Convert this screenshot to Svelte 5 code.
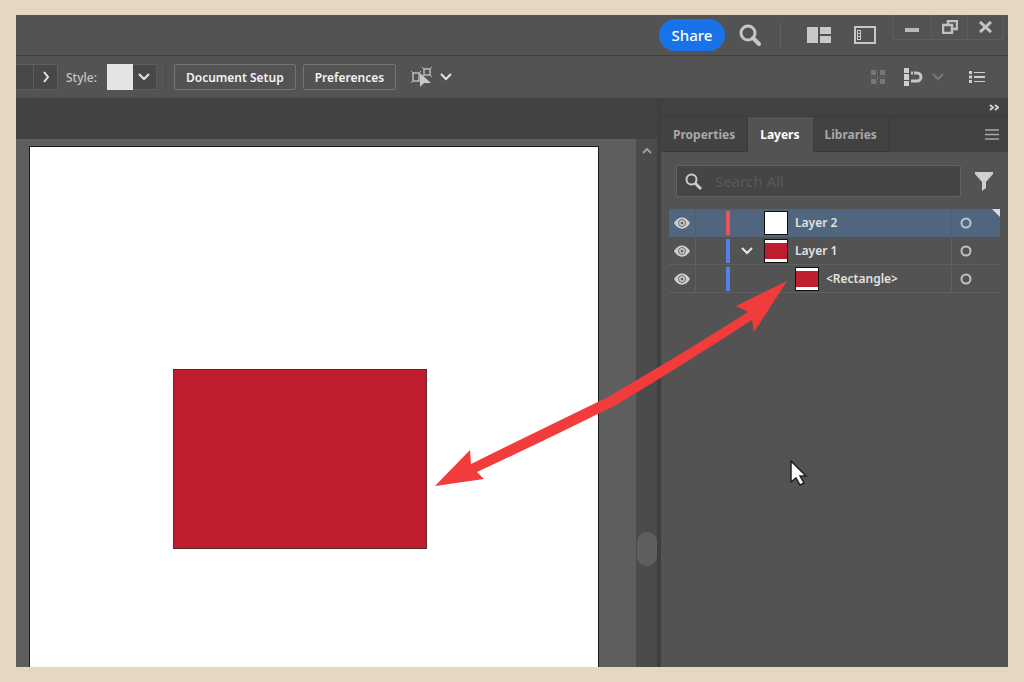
<script lang="ts">
  interface Layer {
    name: string;
    color: string;
    filled: boolean;
    expanded?: boolean;
    child?: boolean;
  }

  const layers: Layer[] = [
    { name: 'Layer 2', color: 'red', filled: false },
    { name: 'Layer 1', color: 'blue', filled: true, expanded: true },
    { name: '<Rectangle>', color: 'blue', filled: true, child: true },
  ];

  const tabs = ['Properties', 'Layers', 'Libraries'];

  let activeTab = $state('Layers');
  let selected = $state('Layer 2');
  let query = $state('');
</script>

<div class="page">
  <div class="window">
    <header class="title-bar">
      <button class="share">Share</button>
      <button class="icon search-btn" aria-label="Search">
        <svg width="24" height="24" viewBox="0 0 24 24" fill="none" stroke="#c6c6c6">
          <circle cx="10" cy="10" r="7" stroke-width="3" />
          <path d="M15 15l6 6" stroke-width="4" stroke-linecap="round" />
        </svg>
      </button>
      <span class="bar-divider"></span>
      <button class="icon arrange" aria-label="Arrange documents">
        <svg width="24" height="16" viewBox="0 0 24 16" fill="#c8c8c8">
          <path d="M0 0h11v16H0zM13 0h11v7H13zM13 9h11v7H13z" />
        </svg>
      </button>
      <button class="icon workspace-btn" aria-label="Switch workspace">
        <svg width="22" height="18" viewBox="0 0 22 18" fill="none" stroke="#c8c8c8">
          <rect x="1" y="1" width="20" height="16" stroke-width="2" />
          <rect x="3.5" y="4.500" width="3" height="9" />
          <path d="M3.500 7.500h3M3.500 10.500h3" />
        </svg>
      </button>
      <div class="window-controls">
        <button class="icon" aria-label="Minimize">
          <svg width="14" height="14" viewBox="0 0 14 14"><path d="M0 8h14v4H0z" fill="#b8b8b8" /></svg>
        </button>
        <button class="icon" aria-label="Restore">
          <svg width="16" height="14" viewBox="0 0 16 14" fill="none" stroke="#c0c0c0" stroke-width="2.500">
            <path d="M6 4V1h9v8h-4" />
            <path d="M1 5h9v8H1z" />
          </svg>
        </button>
        <button class="icon" aria-label="Close">
          <svg width="13" height="12" viewBox="0 0 13 12"><path d="M1 1l11 10M12 1L1 11" stroke="#c4c4c4" stroke-width="3" /></svg>
        </button>
      </div>
    </header>

    <div class="control-bar">
      <span class="stub"></span>
      <button class="icon drop" aria-label="More">
        <svg width="8" height="12" viewBox="0 0 8 12" fill="none"><path d="M2 1l4 5-4 5" stroke="#e4e4e4" stroke-width="2" /></svg>
      </button>
      <span class="label">Style:</span>
      <button class="swatch" aria-label="Graphic style"></button>
      <button class="icon drop" aria-label="Style options">
        <svg width="12" height="8" viewBox="0 0 12 8" fill="none"><path d="M1 1l5 5 5-5" stroke="#e4e4e4" stroke-width="2" /></svg>
      </button>
      <span class="bar-divider setup-divider"></span>
      <button class="outlined setup">Document Setup</button>
      <button class="outlined">Preferences</button>
      <button class="icon select-similar" aria-label="Select similar objects">
        <svg width="42" height="22" viewBox="0 0 42 22" fill="none" stroke="#b9b9b9">
          <path d="M3 7h6v8H3zM14 3h6v6h-6z" stroke-width="1.500" />
          <path d="M1 5l2 2M11 5L9 7M1 17l2-2M12 1l2 2M22 1l-2 2M22 11l-2-2M12 11l2-2" />
          <path d="M10 7v14l4-4 7 0z" fill="#c8c8c8" stroke="none" />
          <path d="M31 8l5 5 5-5" stroke="#e4e4e4" stroke-width="2" />
        </svg>
      </button>
      <span class="spacer"></span>
      <button class="icon grid-btn" aria-label="Snap to grid">
        <svg width="16" height="16" viewBox="0 0 16 16" fill="#777">
          <path d="M1 1h5v5H1zM10 1h5v5h-5zM1 10h5v5H1zM10 10h5v5h-5z" />
          <path d="M7.500 0v16M0 8h16" stroke="#6c6c6c" stroke-dasharray="2 1" />
        </svg>
      </button>
      <button class="icon snap-btn" aria-label="Snap to pixel">
        <svg width="20" height="20" viewBox="0 0 20 20" fill="#cfcfcf">
          <path d="M1 1h5v5H1zM1 7h5v6H1zM1 14h5v5H1z" />
          <path d="M8 6h6a4 4 0 0 1 0 8H8" fill="none" stroke="#c6c6c6" stroke-width="3" stroke-dasharray="2 1 30" />
        </svg>
      </button>
      <button class="icon snap-more" aria-label="Snap options">
        <svg width="12" height="8" viewBox="0 0 12 8" fill="none"><path d="M1 1l5 5 5-5" stroke="#777" stroke-width="2" /></svg>
      </button>
      <button class="icon bar-menu" aria-label="Control bar menu">
        <svg width="16" height="12" viewBox="0 0 16 12" fill="#cfcfcf">
          <path d="M0 0h3v3H0zM0 4.500h3v3H0zM0 9h3v3H0zM5 1h11v1H5zM5 5h11v2H5zM5 10h11v1H5z" />
        </svg>
      </button>
    </div>

    <div class="work-area">
      <main class="document">
        <div class="document-tabs"></div>
        <div class="canvas-row">
          <div class="canvas">
            <div class="artboard">
              <div class="red-shape"></div>
            </div>
          </div>
          <div class="scrollbar">
            <svg width="10" height="6" viewBox="0 0 10 6" fill="none"><path d="M1 5l4-4 4 4" stroke="#a0a0a0" stroke-width="2" /></svg>
            <span class="thumb"></span>
          </div>
        </div>
      </main>

      <aside class="panel">
        <div class="panel-top">
          <button class="icon" aria-label="Collapse panels">
            <svg width="10" height="7" viewBox="0 0 10 7" fill="none"><path d="M1 1l3 2.500-3 2.500M6 1l3 2.500-3 2.500" stroke="#d0d0d0" stroke-width="2" /></svg>
          </button>
        </div>
        <div class="tabs" role="tablist">
          {#each tabs as tab}
            <button
              class="tab"
              class:active={activeTab === tab}
              role="tab"
              aria-selected={activeTab === tab}
              onclick={() => (activeTab = tab)}>{tab}</button>
          {/each}
          <button class="icon panel-menu" aria-label="Panel menu">
            <svg width="14" height="11" viewBox="0 0 14 11"><path d="M0 1h14M0 5.500h14M0 10h14" stroke="#a8a8a8" stroke-width="1.500" /></svg>
          </button>
        </div>

        <div class="panel-body">
          <div class="search-row">
            <label class="search">
              <svg width="17" height="17" viewBox="0 0 17 17" fill="none" stroke="#cdcdcd">
                <circle cx="6.500" cy="6.500" r="5" stroke-width="2" />
                <path d="M10 10l6 6" stroke-width="3" />
              </svg>
              <input type="text" placeholder="Search All" aria-label="Search All" bind:value={query} />
            </label>
            <button class="icon" aria-label="Filter layers">
              <svg width="18" height="19" viewBox="0 0 18 19"><path d="M0 0h18v2l-7 8v6l-4 3v-9L0 2z" fill="#cfcfcf" /></svg>
            </button>
          </div>

          <ul class="layers">
            {#each layers as layer}
              <li class="layer" class:selected={selected === layer.name}>
                <button class="icon eye" aria-label="Toggle visibility of {layer.name}">
                  <svg width="16" height="12" viewBox="0 0 16 12">
                    <path d="M0 6C4-1.500 12-1.500 16 6 12 13.500 4 13.500 0 6z" fill="#cfcfcf" />
                    <circle cx="8" cy="6" r="3.500" fill="none" stroke="#666" />
                    <circle cx="8" cy="6" r="1.500" fill="#666" />
                  </svg>
                </button>
                <span class="lock"></span>
                <span class="stripe {layer.color}"></span>
                <span class="twirl" class:indent={layer.child}>
                  {#if layer.expanded}
                    <button class="icon" aria-label="Collapse {layer.name}">
                      <svg width="12" height="8" viewBox="0 0 12 8" fill="none"><path d="M1 1l5 5 5-5" stroke="#e8e8e8" stroke-width="2" /></svg>
                    </button>
                  {/if}
                </span>
                <span class="thumbnail" class:filled={layer.filled}></span>
                <button class="name" onclick={() => (selected = layer.name)}>{layer.name}</button>
                <button class="icon target" aria-label="Target {layer.name}">
                  <svg width="12" height="12" viewBox="0 0 12 12"><circle cx="6" cy="6" r="4.500" fill="none" stroke="#bdc4c8" stroke-width="2" /></svg>
                </button>
                {#if selected === layer.name}
                  <span class="corner"></span>
                {/if}
              </li>
            {/each}
          </ul>
        </div>
      </aside>
    </div>

    <!-- annotation linking the artwork to its layer -->
    <svg class="arrow" width="352" height="206" viewBox="0 0 352 206" fill="#f23b3b">
      <path d="M0 205L35 169 36 183Q103 150 173 116Q250 71 313 31L301 25 352 0 319 51 317 39Q251 82 181 124Q111 159 42 191L49 198z" />
    </svg>
    <svg class="cursor" width="18" height="27" viewBox="0 0 18 27">
      <path d="M1 1v21l5-4 4 7 4-2-4-7h6z" fill="#fff" stroke="#222" stroke-width="1.500" />
    </svg>
  </div>
</div>

<style>
  :global(body) {
    margin: 0;
    background: #e5d7c2;
  }

  .page {
    box-sizing: border-box;
    display: flex;
    min-height: 100vh;
    padding: 15px 16px;
    background: #e5d7c2;
    font-family: 'Noto Sans', 'Open Sans', sans-serif;
    font-size: 12px;
    color: #dcdcdc;
  }

  .window {
    position: relative;
    flex: 1;
    display: flex;
    flex-direction: column;
    min-width: 0;
    overflow: hidden;
    background: #535353;
  }

  button {
    margin: 0;
    padding: 0;
    border: 0;
    background: none;
    font: inherit;
    color: inherit;
    cursor: pointer;
  }

  svg {
    display: block;
  }

  .icon {
    display: flex;
    align-items: center;
    justify-content: center;
    flex: none;
  }

  .title-bar {
    display: flex;
    align-items: center;
    justify-content: flex-end;
    height: 40px;
    border-bottom: 1px solid #3e3e3e;
  }

  .share {
    width: 66px;
    height: 32px;
    border-radius: 16px;
    background: #1973e8;
    color: #fff;
    font-size: 15px;
    font-weight: 500;
  }

  .search-btn {
    margin-left: 13px;
  }

  .bar-divider {
    width: 1px;
    height: 24px;
    margin-left: 18px;
    background: #636363;
  }

  .arrange {
    margin-left: 26px;
  }

  .workspace-btn {
    margin-left: 23px;
  }

  .window-controls {
    display: flex;
    align-self: flex-start;
    margin: 0 4px 0 16px;
    border: 1px solid #5e5e5e;
    border-top: 0;
  }

  .window-controls .icon {
    width: 36px;
    height: 24px;
  }

  .window-controls .icon:first-child {
    width: 38px;
  }

  .window-controls .icon + .icon {
    border-left: 1px solid #5e5e5e;
  }

  .control-bar {
    display: flex;
    align-items: center;
    height: 42px;
    border-bottom: 1px solid #3e3e3e;
  }

  .stub {
    width: 18px;
    height: 26px;
    border: 1px solid #5e5e5e;
    border-left: 0;
    background: #484848;
    box-sizing: border-box;
  }

  .drop {
    box-sizing: border-box;
    width: 24px;
    height: 26px;
    border: 1px solid #5e5e5e;
    border-left: 0;
    background: #484848;
  }

  .label {
    margin: 0 10px 0 8px;
    color: #c4c4c4;
    font-weight: 500;
  }

  .swatch {
    width: 26px;
    height: 26px;
    background: #e4e4e4;
  }

  .setup-divider {
    margin-left: 8px;
    background: #4a4a4a;
  }

  .outlined {
    height: 26px;
    margin-left: 7px;
    padding: 0 11px;
    border: 1px solid #747474;
    border-radius: 2px;
    color: #f2f2f2;
    font-weight: 600;
  }

  .setup {
    margin-left: 8px;
  }

  .select-similar {
    margin-left: 14px;
  }

  .spacer {
    flex: 1;
  }

  .snap-btn {
    margin-left: 17px;
  }

  .snap-more {
    margin-left: 9px;
  }

  .bar-menu {
    margin: 0 23px 0 25px;
  }

  .work-area {
    flex: 1;
    display: flex;
    min-height: 0;
  }

  .document {
    flex: 1;
    display: flex;
    flex-direction: column;
    min-width: 0;
  }

  .document-tabs {
    height: 40px;
    background: #424242;
  }

  .canvas-row {
    flex: 1;
    display: flex;
  }

  .canvas {
    flex: 1;
    display: flex;
    padding: 7px 37px 0 13px;
    background: #5e5e5e;
  }

  .artboard {
    position: relative;
    flex: 1;
    border: 1px solid #1c1c1c;
    border-bottom: 0;
    background: #fff;
  }

  .red-shape {
    position: absolute;
    box-sizing: border-box;
    left: 143px;
    top: 222px;
    width: 254px;
    height: 180px;
    border: 1px solid #5a2a30;
    background: #be1e2d;
  }

  .scrollbar {
    display: flex;
    flex-direction: column;
    align-items: center;
    justify-content: space-between;
    width: 21px;
    padding: 9px 0 101px;
    background: #4b4b4b;
  }

  .scrollbar .thumb {
    width: 20px;
    height: 34px;
    border-radius: 10px;
    background: #5f5f5f;
  }

  .panel {
    display: flex;
    flex-direction: column;
    width: 347px;
    border-left: 4px solid #3f3f3f;
  }

  .panel-top {
    display: flex;
    justify-content: flex-end;
    height: 17px;
    padding-right: 9px;
    background: #424242;
    border-bottom: 1px solid #3a3a3a;
  }

  .tabs {
    display: flex;
    height: 35px;
    background: #424242;
  }

  .tab {
    padding: 0 12px;
    border-right: 1px solid #383838;
    border-bottom: 1px solid #383838;
    color: #a8a8a8;
    font-weight: 700;
  }

  .tab.active {
    background: #535353;
    border-color: #535353;
    color: #fff;
  }

  .panel-menu {
    margin: 0 9px 0 auto;
  }

  .panel-body {
    flex: 1;
    padding: 13px 8px 0;
  }

  .search-row {
    display: flex;
    align-items: center;
    gap: 14px;
    margin: 0 7px 12px;
  }

  .search {
    flex: 1;
    display: flex;
    align-items: center;
    gap: 13px;
    height: 30px;
    padding-left: 8px;
    border: 1px solid #636363;
    border-radius: 2px;
    background: #454545;
  }

  .search input {
    flex: 1;
    min-width: 0;
    padding: 0;
    border: 0;
    outline: 0;
    background: none;
    color: #dcdcdc;
    font: inherit;
    font-size: 15px;
  }

  .search input::placeholder {
    color: #5a5a5a;
    opacity: 1;
  }

  .layers {
    margin: 0;
    padding: 0;
    list-style: none;
  }

  .layer {
    position: relative;
    display: flex;
    align-items: center;
    box-sizing: border-box;
    height: 28px;
    border-bottom: 1px solid #5f5f5f;
  }

  .layer.selected {
    background: #4f667e;
    border-color: #4f667e;
  }

  .eye {
    width: 27px;
    height: 27px;
    border-right: 1px solid #5f5f5f;
  }

  .lock {
    width: 30px;
  }

  .stripe {
    width: 4px;
    height: 24px;
  }

  .stripe.red {
    background: #ee5257;
  }

  .stripe.blue {
    background: #5680ea;
  }

  .twirl {
    display: flex;
    justify-content: center;
    width: 34px;
  }

  .twirl.indent {
    width: 65px;
  }

  .thumbnail {
    box-sizing: border-box;
    width: 24px;
    height: 24px;
    border: 1px solid #111;
    background: #fff;
  }

  .thumbnail.filled {
    background: linear-gradient(#fff 3px, #be1e2d 3px, #be1e2d 19px, #fff 19px);
  }

  .name {
    flex: 1;
    padding-left: 7px;
    text-align: left;
    color: #e2e2e2;
    font-weight: 600;
  }

  .target {
    width: 49px;
    height: 27px;
    padding-right: 20px;
    box-sizing: border-box;
    border-left: 1px solid #5f5f5f;
  }

  .selected .eye,
  .selected .target {
    border-color: #48607a;
  }

  .corner {
    position: absolute;
    top: 0;
    right: 0;
    border-top: 8px solid #d8dde2;
    border-left: 8px solid transparent;
  }

  .arrow {
    position: absolute;
    left: 419px;
    top: 266px;
    pointer-events: none;
  }

  .cursor {
    position: absolute;
    left: 774px;
    top: 445px;
    pointer-events: none;
  }
</style>
